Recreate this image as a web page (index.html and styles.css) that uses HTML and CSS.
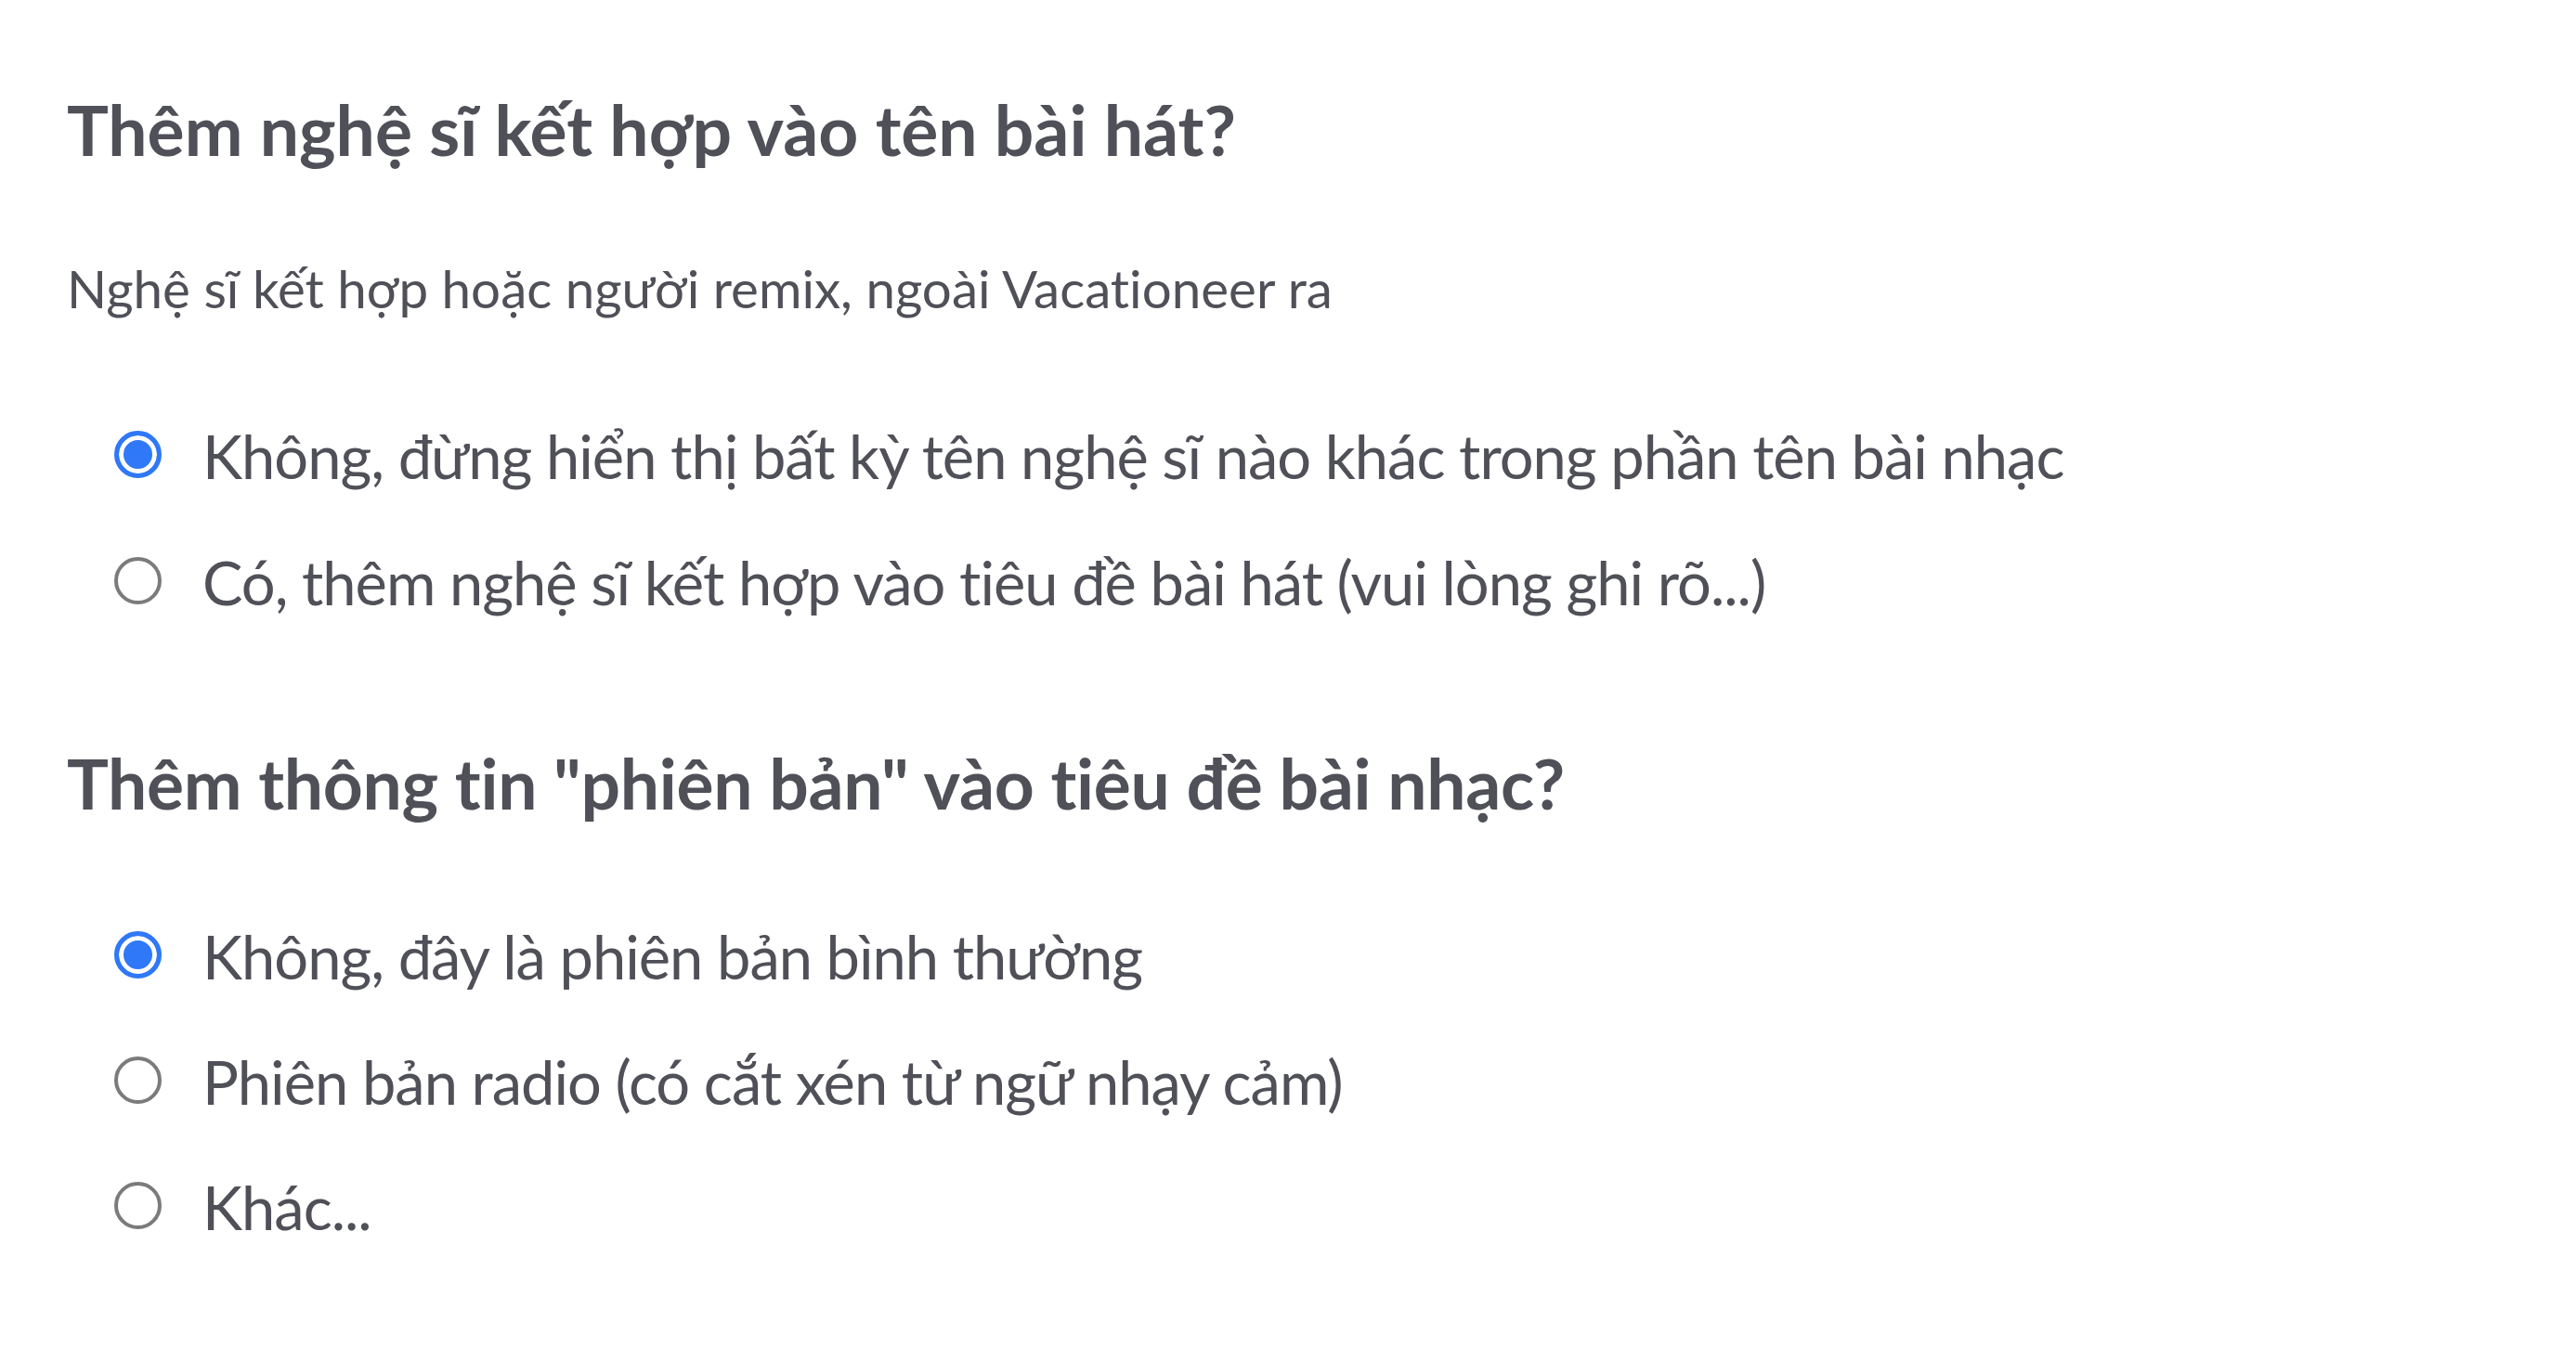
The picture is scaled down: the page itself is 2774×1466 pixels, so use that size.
FILE: index.html
```html
<!DOCTYPE html>
<html lang="vi">
<head>
<meta charset="utf-8">
<title>Thông tin bài hát</title>
<link rel="stylesheet" href="styles.css">
</head>
<body>
<main class="form">
  <section class="question">
    <h2 class="question-title">Thêm nghệ sĩ kết hợp vào tên bài hát?</h2>
    <p class="question-hint">Nghệ sĩ kết hợp hoặc người remix, ngoài Vacationeer ra</p>
    <div class="options">
      <label class="option">
        <input class="radio" type="radio" name="featured" checked>
        <span class="option-text">Không, đừng hiển thị bất kỳ tên nghệ sĩ nào khác trong phần tên bài nhạc</span>
      </label>
      <label class="option">
        <input class="radio" type="radio" name="featured">
        <span class="option-text">Có, thêm nghệ sĩ kết hợp vào tiêu đề bài hát (vui lòng ghi rõ...)</span>
      </label>
    </div>
  </section>
  <section class="question question-next">
    <h2 class="question-title title-tight">Thêm thông tin "phiên bản" vào tiêu đề bài nhạc?</h2>
    <div class="options options-tight">
      <label class="option">
        <input class="radio" type="radio" name="version" checked>
        <span class="option-text">Không, đây là phiên bản bình thường</span>
      </label>
      <label class="option">
        <input class="radio" type="radio" name="version">
        <span class="option-text">Phiên bản radio (có cắt xén từ ngữ nhạy cảm)</span>
      </label>
      <label class="option">
        <input class="radio" type="radio" name="version">
        <span class="option-text">Khác...</span>
      </label>
    </div>
  </section>
</main>
</body>
</html>
```

FILE: styles.css
```css
html, body {
  margin: 0;
  padding: 0;
  background: #ffffff;
}

body {
  font-family: Lato, "Open Sans", sans-serif;
  color: #4f5058;
  font-variant-ligatures: no-common-ligatures;
}

.form {
  padding: 94px 0 0 72px;
}

.question-title {
  margin: 0;
  font-size: 75px;
  font-weight: 700;
  line-height: 1.2;
}

.title-tight {
  letter-spacing: -0.3px;
}

.question-hint {
  margin: 93px 0 0;
  font-size: 56.5px;
  font-weight: 400;
  line-height: 1.2;
}

.options {
  display: flex;
  flex-direction: column;
  gap: 58px;
  margin-top: 107px;
  padding-left: 51px;
}

.options-tight {
  margin-top: 103px;
  gap: 57px;
}

.question-next {
  margin-top: 132px;
}

.option {
  display: flex;
  align-items: center;
  gap: 44px;
  font-size: 65px;
  letter-spacing: -1px;
  line-height: 1.2;
  cursor: pointer;
}

.radio {
  appearance: none;
  -webkit-appearance: none;
  flex: none;
  box-sizing: border-box;
  width: 51px;
  height: 51px;
  margin: 0;
  border: 4px solid #7b7b7b;
  border-radius: 50%;
  background: #ffffff;
  position: relative;
  top: -1px;
}

.radio:checked {
  border: 5px solid #2f78f7;
  background: #2f78f7;
  box-shadow: inset 0 0 0 5px #ffffff;
}
```
